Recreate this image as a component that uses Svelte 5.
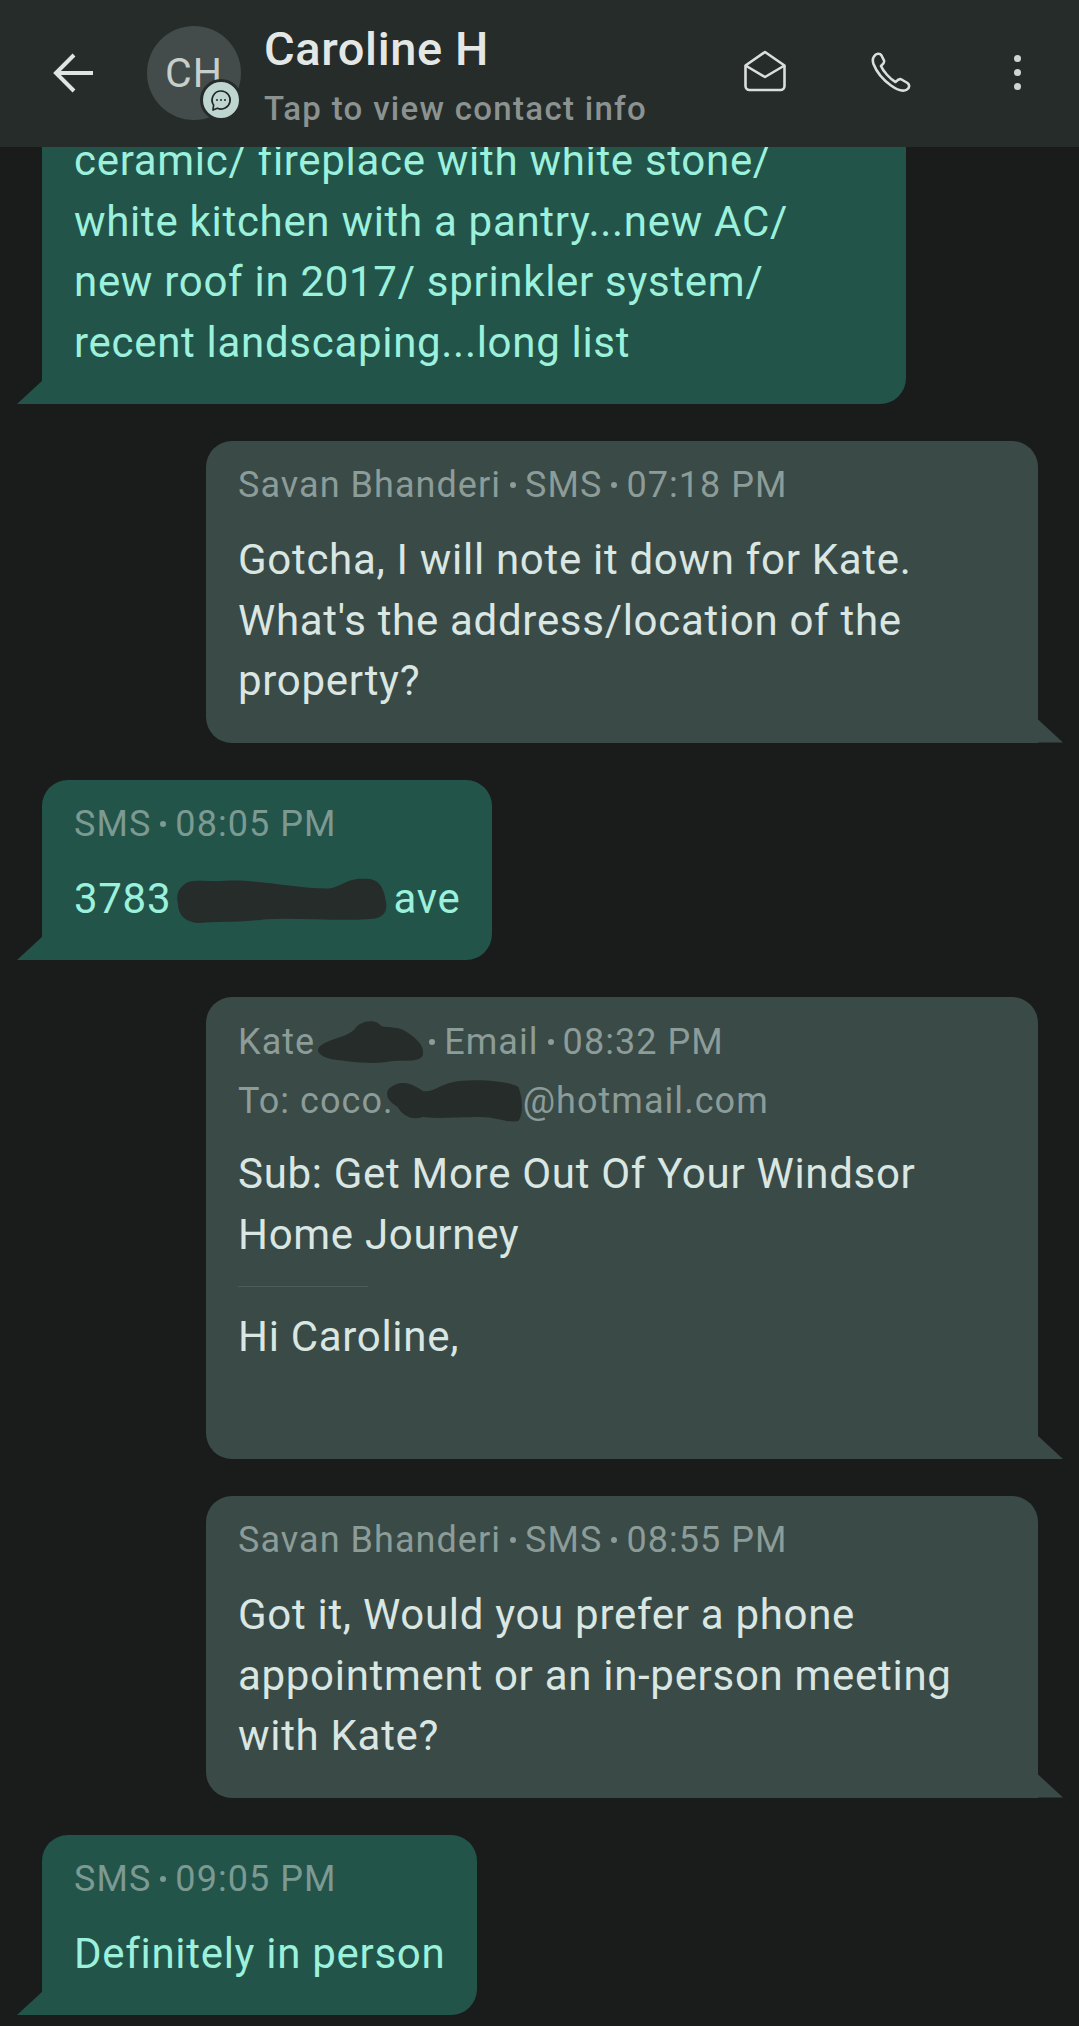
<script lang="ts">
  const blobA = 'M6 12 C14 2 30 8 50 6 C80 4 120 14 150 14 C165 14 170 2 190 4 C205 4 208 16 210 28 C212 40 206 46 190 46 C160 48 120 44 90 46 C60 50 40 48 24 50 C10 50 2 42 2 30 C0 22 2 16 6 12 Z';
  const blobB = 'M4 30 C14 20 24 22 34 12 C40 0 54 0 58 8 C66 10 72 8 80 14 C90 22 96 30 94 40 C90 48 78 44 66 46 C50 50 30 46 16 44 C6 42 0 36 4 30 Z';
  const blobC = 'M4 10 C14 0 24 4 34 12 C44 14 50 4 66 2 C86 0 108 2 118 8 C122 20 122 36 118 42 C106 44 100 38 84 38 C64 38 50 40 34 38 C24 42 16 36 12 28 C6 24 0 18 4 10 Z';
</script>

<div class="screen">
  <header class="topbar">
    <svg class="back" viewBox="0 0 40 40" fill="none" stroke="currentColor" stroke-width="4">
      <path d="M40 20H3" /><path d="M21 2L3 20l18 18" />
    </svg>
    <div class="avatar">
      <span>CH</span>
      <div class="badge">
        <svg viewBox="0 0 24 24" width="24" height="24" fill="none" stroke="#1f2826" stroke-width="1.7">
          <path d="M12 3a9 9 0 1 1-3.6 17.2L4 22l.6-5A9 9 0 0 1 12 3z" stroke-linejoin="round" />
          <circle cx="8" cy="12" r="1" fill="#1f2826" stroke="none" />
          <circle cx="12" cy="12" r="1" fill="#1f2826" stroke="none" />
          <circle cx="16" cy="12" r="1" fill="#1f2826" stroke="none" />
        </svg>
      </div>
    </div>
    <div class="who">
      <div class="name">Caroline H</div>
      <div class="hint">Tap to view contact info</div>
    </div>
    <svg class="icon mail" viewBox="0 0 42 42" fill="none" stroke="currentColor" stroke-width="2.6" stroke-linejoin="round">
      <path d="M1.5 15.5L21 2l19.5 13.500V36a4 4 0 0 1-4 4H5.500a4 4 0 0 1-4-4z" />
      <path d="M1.500 15.500L21 27l19.500-11.500" />
    </svg>
    <svg class="icon phone" viewBox="0 0 40 40" fill="none" stroke="currentColor" stroke-width="2.6" stroke-linejoin="round">
      <path d="M3 4.500C5 1 9 1 10.500 3.500L13 8.500C14 10.500 11.500 12.500 10 14C12 19 19 27 24.500 30C26 28.500 28 26 30.500 27.500L36.500 31C39 33 38.500 36 36 37.500C33 39.500 27 38.500 20 33.500C11 27 5 18.500 2.500 12C1.500 9 1.500 6.500 3 4.500Z" />
    </svg>
    <div class="more"><i></i><i></i><i></i></div>
  </header>

  <main class="thread">
    <article class="bubble in first">
      <p class="body">ceramic/ fireplace with white stone/<br />white kitchen with a pantry...new AC/<br />new roof in 2017/ sprinkler system/<br />recent landscaping...long list</p>
    </article>

    <article class="bubble out">
      <div class="meta">Savan Bhanderi<b></b>SMS<b></b>07:18 PM</div>
      <p class="body">Gotcha, I will note it down for Kate.<br />What's the address/location of the<br />property?</p>
    </article>

    <article class="bubble in">
      <div class="meta">SMS<b></b>08:05 PM</div>
      <p class="body addr-line">3783 <svg class="blob addr" viewBox="0 0 212 52" preserveAspectRatio="none"><path d={blobA} /></svg> ave</p>
    </article>

    <article class="bubble out email">
      <div class="meta">Kate <svg class="blob sender" viewBox="0 0 96 50" preserveAspectRatio="none"><path d={blobB} /></svg><b></b>Email<b></b>08:32 PM</div>
      <div class="meta to">To: coco.<svg class="blob rcpt" viewBox="0 0 122 44" preserveAspectRatio="none"><path d={blobC} /></svg>@hotmail.com</div>
      <p class="body">Sub: Get More Out Of Your Windsor<br />Home Journey</p>
      <hr />
      <p class="body">Hi Caroline,</p>
    </article>

    <article class="bubble out">
      <div class="meta">Savan Bhanderi<b></b>SMS<b></b>08:55 PM</div>
      <p class="body">Got it, Would you prefer a phone<br />appointment or an in-person meeting<br />with Kate?</p>
    </article>

    <article class="bubble in">
      <div class="meta">SMS<b></b>09:05 PM</div>
      <p class="body">Definitely in person</p>
    </article>
  </main>
</div>

<style>
  :global(body) {
    background: #191c1c;
  }

  .screen {
    width: 1079px;
    height: 2026px;
    overflow: hidden;
    background: #1a1c1c;
    font-family: Roboto, sans-serif;
  }

  .topbar {
    position: relative;
    z-index: 2;
    height: 147px;
    box-sizing: border-box;
    display: flex;
    align-items: flex-start;
    background: #252c2a;
    color: #dfe5e2;
  }

  .back {
    width: 40px;
    height: 40px;
    margin: 53px 0 0 53px;
    flex: none;
  }

  .avatar {
    position: relative;
    width: 94px;
    height: 94px;
    margin: 26px 0 0 54px;
    border-radius: 50%;
    background: #434c4a;
    color: #c6cfcc;
    font-size: 41px;
    letter-spacing: 1px;
    display: flex;
    align-items: center;
    justify-content: center;
    flex: none;
  }

  .badge {
    position: absolute;
    left: 53px;
    top: 53px;
    width: 36px;
    height: 36px;
    border: 3px solid #252c2a;
    border-radius: 50%;
    background: #bfd6d0;
    display: flex;
    align-items: center;
    justify-content: center;
  }

  .who {
    margin: 23px 0 0 23px;
    width: 480px;
    flex: none;
  }

  .name {
    font-size: 47px;
    line-height: 52px;
    font-weight: 500;
    letter-spacing: 0.6px;
    color: #e3e8e6;
  }

  .hint {
    margin-top: 13px;
    font-size: 33px;
    line-height: 42px;
    font-weight: 500;
    letter-spacing: 1.3px;
    color: #8b9290;
  }

  .icon {
    flex: none;
    color: #dadfdd;
  }

  .mail {
    width: 42px;
    height: 42px;
    margin: 50px 0 0 0;
  }

  .phone {
    width: 40px;
    height: 40px;
    margin: 52px 0 0 85px;
  }

  .more {
    display: flex;
    flex-direction: column;
    gap: 7px;
    margin: 55px 0 0 103px;
  }

  .more i {
    display: block;
    width: 7px;
    height: 7px;
    border-radius: 50%;
    background: #cfd5d3;
  }

  .thread {
    display: flex;
    flex-direction: column;
    gap: 37px;
    margin-top: -16px;
    padding: 0 41px 0 42px;
  }

  .bubble {
    position: relative;
    box-sizing: border-box;
    border-radius: 26px;
    padding: 22px 32px 31px;
  }

  .bubble::after {
    content: '';
    position: absolute;
    bottom: 0;
    width: 26px;
    height: 24px;
  }

  .in {
    align-self: flex-start;
    background: #23544a;
    color: #9cf1dc;
    border-bottom-left-radius: 0;
  }

  .in::after {
    left: -25px;
    background: #23544a;
    clip-path: polygon(100% 0, 100% 100%, 0 100%);
  }

  .out {
    align-self: flex-end;
    width: 832px;
    background: #3a4a47;
    color: #d9e6e2;
    border-bottom-right-radius: 0;
  }

  .out::after {
    right: -25px;
    background: #3a4a47;
    clip-path: polygon(0 0, 100% 100%, 0 100%);
  }

  .first {
    width: 864px;
    padding-top: 0;
    border-top-left-radius: 0;
    border-top-right-radius: 0;
  }

  .meta {
    font-size: 36px;
    line-height: 44px;
    letter-spacing: 1.05px;
    color: #8c9c98;
    display: flex;
    align-items: center;
    white-space: pre;
  }

  .in .meta {
    color: #7c9a92;
  }

  .meta b {
    width: 6px;
    height: 6px;
    margin: 0 9px;
    border-radius: 50%;
    background: currentColor;
  }

  .body {
    margin: 23px 0 0;
    font-size: 42px;
    line-height: 60.500px;
    letter-spacing: 0.7px;
    white-space: nowrap;
  }

  .first .body {
    margin-top: 0;
  }

  .blob {
    fill: #252c2a;
    display: inline-block;
  }

  .addr-line {
    height: 60.500px;
  }

  .addr {
    width: 212px;
    height: 50px;
    vertical-align: -12px;
    margin: 0 -6px;
  }

  .sender {
    width: 110px;
    height: 46px;
    margin: 0 -5px 0 -10px;
  }

  .rcpt {
    width: 139px;
    height: 44px;
    margin-left: -10px;
  }

  .to {
    margin-top: 14px;
  }

  .email {
    height: 462px;
  }

  .email .body {
    margin-top: 21px;
  }

  .email hr {
    width: 130px;
    margin: 21px 0 0;
    border: none;
    border-top: 1px solid #4c5c58;
  }

  .email hr + .body {
    margin-top: 20px;
  }
</style>
